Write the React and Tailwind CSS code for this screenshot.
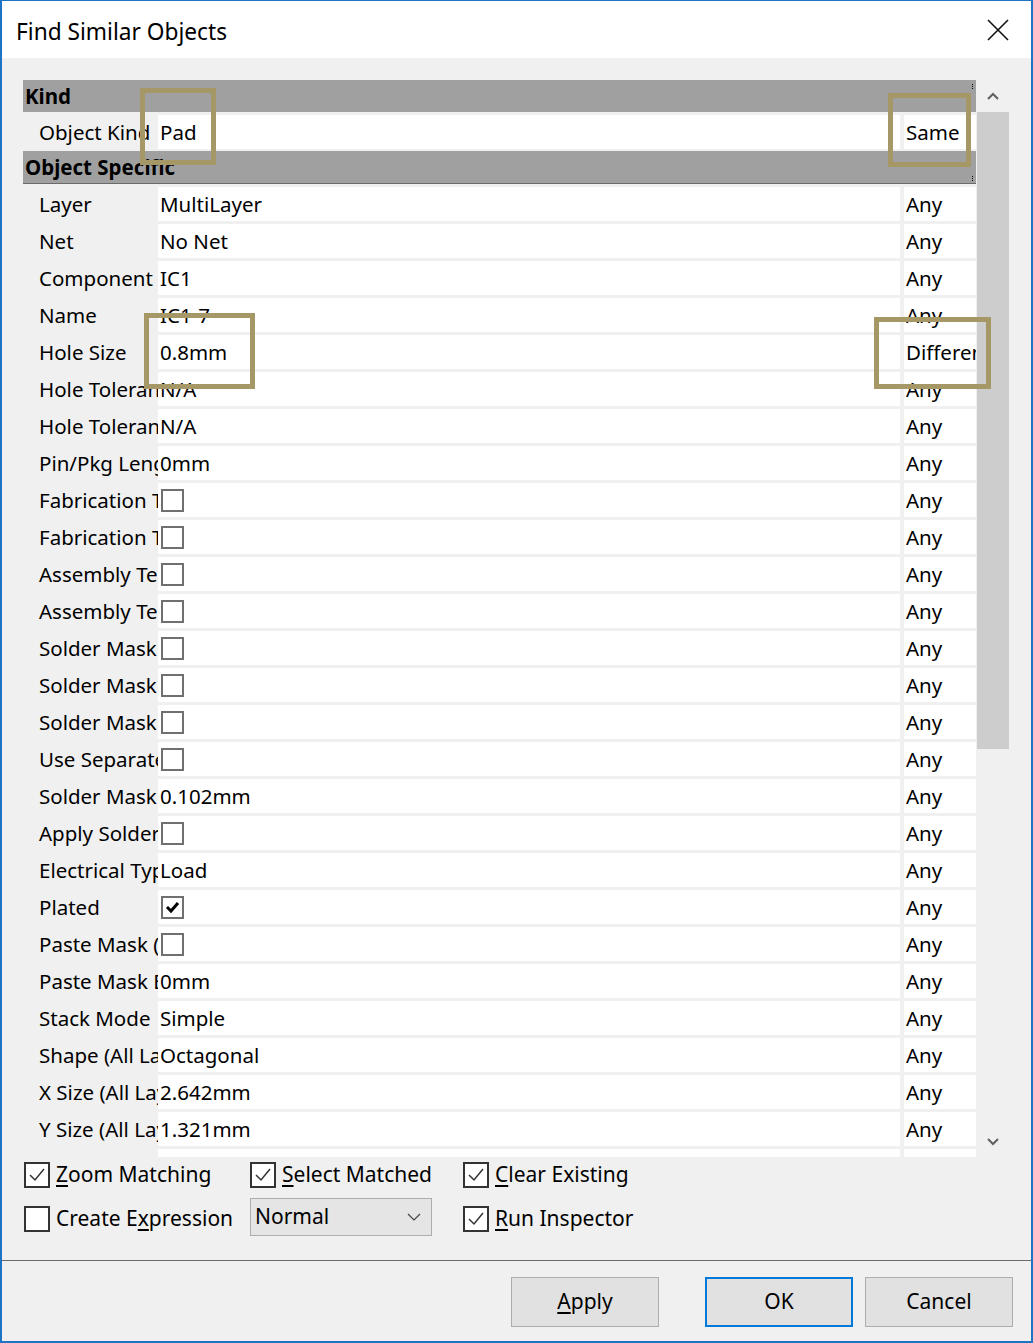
import React from "react";

const rows = [
  ["Layer", "MultiLayer", "Any"],
  ["Net", "No Net", "Any"],
  ["Component", "IC1", "Any"],
  ["Name", "IC1-7", "Any"],
  ["Hole Size", "0.8mm", "Different"],
  ["Hole Tolerance (+)", "N/A", "Any"],
  ["Hole Tolerance (-)", "N/A", "Any"],
  ["Pin/Pkg Length", "0mm", "Any"],
  ["Fabrication Testpoint Top", "cb", "Any"],
  ["Fabrication Testpoint Bottom", "cb", "Any"],
  ["Assembly Testpoint Top", "cb", "Any"],
  ["Assembly Testpoint Bottom", "cb", "Any"],
  ["Solder Mask Tenting - Top", "cb", "Any"],
  ["Solder Mask Tenting - Bottom", "cb", "Any"],
  ["Solder Mask From Hole Edge", "cb", "Any"],
  ["Use Separate Solder Mask Expansion", "cb", "Any"],
  ["Solder Mask Expansion", "0.102mm", "Any"],
  ["Apply Solder Mask Expansion", "cb", "Any"],
  ["Electrical Type", "Load", "Any"],
  ["Plated", "cbx", "Any"],
  ["Paste Mask (Override)", "cb", "Any"],
  ["Paste Mask Expansion", "0mm", "Any"],
  ["Stack Mode", "Simple", "Any"],
  ["Shape (All Layers)", "Octagonal", "Any"],
  ["X Size (All Layers)", "2.642mm", "Any"],
  ["Y Size (All Layers)", "1.321mm", "Any"],
  ["Offset (All Layers)", "Rounded", "Any"],
];

function CellCheck({ checked }) {
  return (
    <div className="ml-[1px] w-[23px] h-[23px] border-2 border-[#707070] bg-white flex items-center justify-center">
      {checked && (
        <svg width="17" height="17" viewBox="0 0 17 17">
          <path d="M3 8 L7 12 L14 4" stroke="#000" strokeWidth="3" fill="none" />
        </svg>
      )}
    </div>
  );
}

function Row({ label, value, match }) {
  return (
    <div className="flex h-[34px] mt-[3px] shrink-0">
      <div className="w-[135px] shrink-0 pl-[16px] overflow-hidden whitespace-nowrap flex items-center">
        {label}
      </div>
      <div className="w-[742px] shrink-0 bg-white pl-[2px] flex items-center whitespace-nowrap overflow-hidden">
        {value === "cb" ? <CellCheck /> : value === "cbx" ? <CellCheck checked /> : value}
      </div>
      <div className="w-[72px] ml-[4px] shrink-0 bg-white pl-[2px] flex items-center whitespace-nowrap overflow-hidden">
        {match}
      </div>
    </div>
  );
}

function OptCheck({ checked }) {
  return (
    <div className="w-[26px] h-[26px] border-2 border-[#333] bg-white flex items-center justify-center shrink-0">
      {checked && (
        <svg width="20" height="20" viewBox="0 0 20 20">
          <polyline points="3,10 8,15 17,4" stroke="#333" strokeWidth="1.5" fill="none" />
        </svg>
      )}
    </div>
  );
}

function Opt({ checked, pre, u, post }) {
  return (
    <div className="flex items-center gap-[6px] h-[26px]">
      <OptCheck checked={checked} />
      <span className="whitespace-nowrap">
        {pre}
        <span className="underline underline-offset-[3px]">{u}</span>
        {post}
      </span>
    </div>
  );
}

const Annot = ({ cls }) => (
  <div className={"absolute border-[5px] border-[#a69766] pointer-events-none " + cls} />
);

export default function App() {
  return (
    <div className="relative w-[1033px] h-[1343px] font-['Noto_Sans',sans-serif] text-[20.5px] text-black">
      <div className="w-[1033px] h-[1343px] flex flex-col border-x-2 border-t border-b-2 border-[#1f73c4] bg-[#f0f0f0] overflow-hidden">
        {/* Title bar */}
        <div className="h-[57px] shrink-0 bg-white flex items-center justify-between pl-[14px] pr-[22px]">
          <span className="text-[22.7px] leading-none pt-[5px]">Find Similar Objects</span>
          <svg width="22" height="22" viewBox="0 0 22 22">
            <path d="M1 1 L21 21 M21 1 L1 21" stroke="#111" strokeWidth="1.6" />
          </svg>
        </div>

        {/* Body */}
        <div className="h-[1202px] shrink-0 flex flex-col">
          <div className="flex mt-[22px] ml-[21px] h-[1077px] shrink-0">
            <div className="w-[953px] h-[1077px] overflow-hidden flex flex-col">
              <div className="h-[32px] shrink-0 bg-[#a0a0a0] font-bold pl-[2px] flex items-center justify-between pr-[3px]">
                <span>Kind</span>
                <span className="w-[2px] h-[5px] border-r border-dotted border-black self-start mt-[4px]" />
              </div>
              <div className="flex h-[34px] mt-[3px] shrink-0">
                <div className="w-[135px] shrink-0 pl-[16px] overflow-hidden whitespace-nowrap flex items-center">
                  Object Kind
                </div>
                <div className="w-[742px] shrink-0 bg-white pl-[2px] flex items-center">Pad</div>
                <div className="w-[72px] ml-[4px] shrink-0 bg-white pl-[2px] flex items-center">Same</div>
              </div>
              <div className="h-[33px] mt-[2px] shrink-0 bg-[#a0a0a0] border-b border-[#6a6a6a] font-bold pl-[2px] flex items-center justify-between pr-[3px]">
                <span>Object Specific</span>
                <span className="w-[2px] h-[5px] border-r border-dotted border-black self-end mb-[2px]" />
              </div>
              {rows.map((r, i) => (
                <Row key={i} label={r[0]} value={r[1]} match={r[2]} />
              ))}
            </div>
            {/* Scrollbar */}
            <div className="w-[32px] ml-[1px] flex flex-col">
              <div className="h-[32px] flex items-center justify-center">
                <svg width="14" height="9" viewBox="0 0 14 9">
                  <polyline points="2,7 7,2 12,7" stroke="#606060" strokeWidth="2" fill="none" />
                </svg>
              </div>
              <div className="h-[637px] bg-[#cdcdcd]" />
              <div className="flex-1" />
              <div className="h-[32px] flex items-center justify-center">
                <svg width="14" height="9" viewBox="0 0 14 9">
                  <polyline points="2,2 7,7 12,2" stroke="#606060" strokeWidth="2" fill="none" />
                </svg>
              </div>
            </div>
          </div>

          {/* Options */}
          <div className="mt-[5px] pl-[22px] text-[21px] grid grid-cols-[226px_213px_auto] gap-y-[10px] items-center">
            <Opt checked pre="" u="Z" post="oom Matching" />
            <Opt checked pre="" u="S" post="elect Matched" />
            <Opt checked pre="" u="C" post="lear Existing" />
            <div className="h-[38px] flex items-center pt-[3px]">
              <Opt pre="Create E" u="x" post="pression" />
            </div>
            <div className="w-[182px] h-[38px] bg-[#e5e5e5] border border-[#adadad] flex items-center justify-between pl-[4px] pr-[10px]">
              <span>Normal</span>
              <svg width="14" height="8" viewBox="0 0 14 8">
                <polyline points="1,1 7,7 13,1" stroke="#444" strokeWidth="1.2" fill="none" />
              </svg>
            </div>
            <div className="h-[38px] flex items-center pt-[3px]">
              <Opt checked pre="" u="R" post="un Inspector" />
            </div>
          </div>
        </div>

        {/* Footer */}
        <div className="h-[81px] shrink-0 border-t border-[#6b6b6b] flex items-start justify-end pt-[16px] pr-[18px] text-[21px]">
          <button className="w-[148px] h-[50px] bg-[#e1e1e1] border border-[#adadad] flex items-center justify-center">
            <span className="underline underline-offset-[3px]">A</span>pply
          </button>
          <button className="w-[148px] h-[50px] ml-[46px] bg-[#e1e1e1] border-2 border-[#0078d7] flex items-center justify-center">
            OK
          </button>
          <button className="w-[148px] h-[50px] ml-[12px] bg-[#e1e1e1] border border-[#adadad] flex items-center justify-center">
            Cancel
          </button>
        </div>
      </div>

      <Annot cls="left-[140px] top-[88px] w-[76px] h-[77px]" />
      <Annot cls="left-[888px] top-[93px] w-[83px] h-[74px]" />
      <Annot cls="left-[144px] top-[313px] w-[111px] h-[76px]" />
      <Annot cls="left-[874px] top-[317px] w-[117px] h-[72px]" />
    </div>
  );
}
